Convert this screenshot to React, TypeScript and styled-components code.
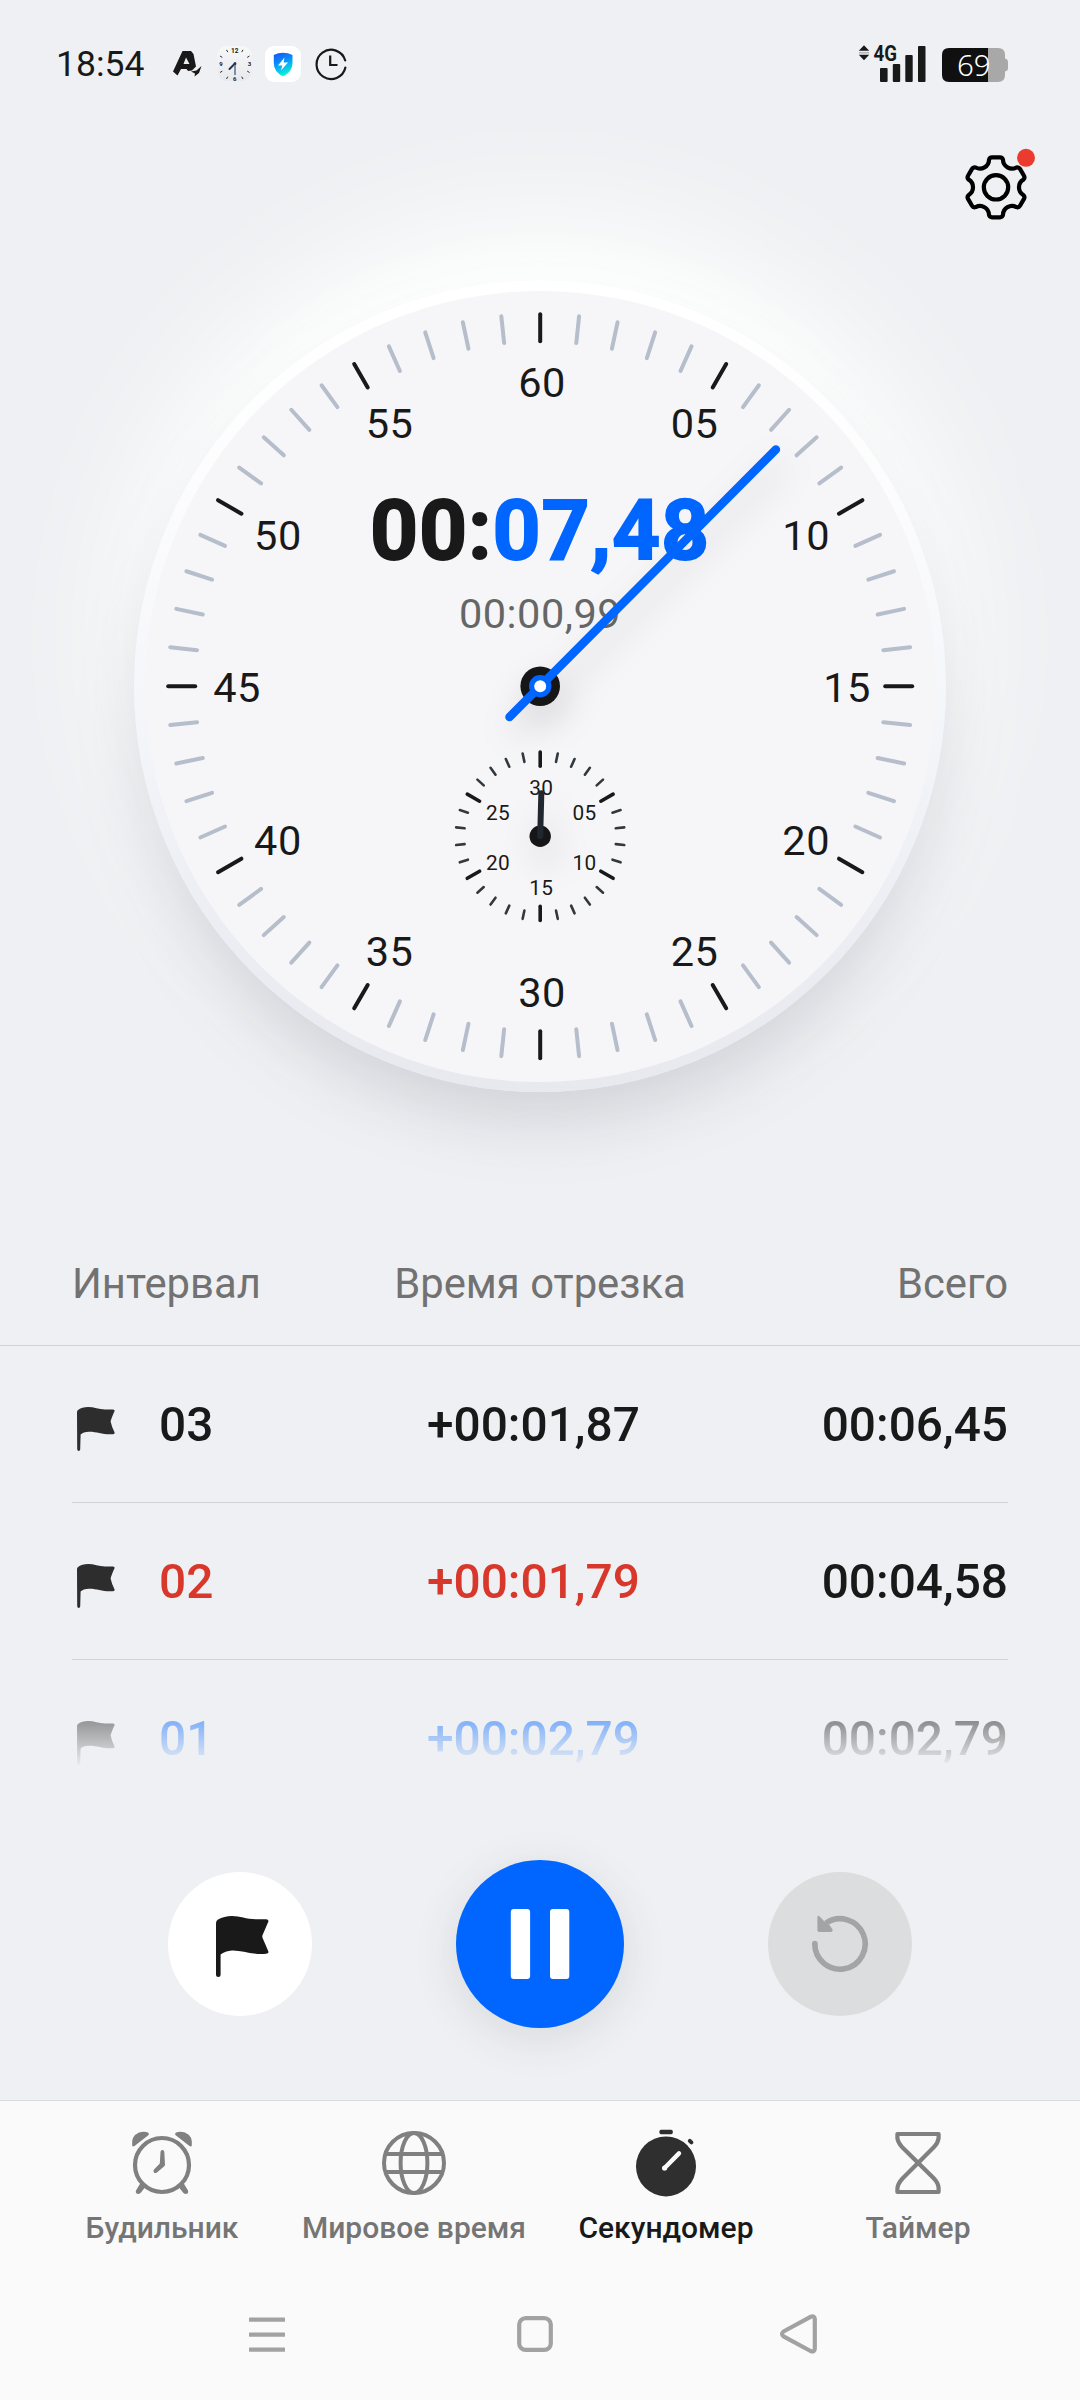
import React from "react";
import styled, { createGlobalStyle } from "styled-components";

const GlobalStyle = createGlobalStyle`
  body { margin: 0; background: #eff0f3; }
  *, *::before, *::after { box-sizing: border-box; }
`;

const ink = "#191919";
const blue = "#0066ff";

const Screen = styled.div`
  width: 1080px;
  height: 2400px;
  display: flex;
  flex-direction: column;
  overflow: hidden;
  background: #eff0f3;
  color: ${ink};
  font-family: Roboto, "Noto Sans", sans-serif;
`;

const StatusBar = styled.header`
  height: 126px;
  flex: none;
  display: flex;
  justify-content: space-between;
  align-items: center;
  padding: 2px 71px 0 56px;

  svg {
    overflow: visible;
  }
`;

const StatusGroup = styled.div`
  display: flex;
  align-items: center;
`;

const StatusTime = styled.span`
  width: 114px;
  font-size: 35.5px;
  line-height: 40px;
`;

const Toolbar = styled.div`
  height: 122px;
  flex: none;
  display: flex;
  justify-content: flex-end;
  padding: 20px 38px 0 0;
`;

const SettingsButton = styled.button`
  border: 0;
  padding: 0;
  width: 80px;
  height: 80px;
  background: none;
`;

const DialArea = styled.section`
  height: 988px;
  flex: none;
  display: flex;
  justify-content: center;
  align-items: flex-start;
  padding-top: 32px;
`;

const Dial = styled.div`
  display: grid;
  width: 812px;
  height: 812px;
  padding: 10.5px;
  border-radius: 50%;
  background: linear-gradient(#ffffff 5%, #fdfdfe 22%, #f5f6fa 52%, #eceef3 78%, #e8e9ef 100%);
  box-shadow:
    0 36px 62px -8px rgba(120, 122, 136, 0.27),
    0 -30px 60px -14px rgba(255, 255, 255, 0.8),
    0 -48px 130px 10px #fefffe;
`;

const Face = styled.div`
  display: grid;
  border-radius: 50%;
  background: #f6f6f9;

  & > * {
    grid-area: 1 / 1;
  }
`;

const Drawing = styled.svg`
  display: block;
  width: 791px;
  height: 791px;
  overflow: visible;
`;

const Readout = styled.div`
  display: flex;
  flex-direction: column;
  align-items: center;
  padding-top: 190px;
`;

const MainTime = styled.div`
  font-size: 84px;
  line-height: 100px;
  font-weight: 700;
  letter-spacing: 0.8px;
  -webkit-text-stroke: 1.8px currentColor;
`;

const Accent = styled.span`
  color: ${blue};
`;

const LapTime = styled.div`
  margin-top: 8px;
  font-size: 41.5px;
  line-height: 50px;
  letter-spacing: 0.5px;
  color: #666666;
`;

const LapTable = styled.section`
  height: 538px;
  flex: none;
  display: flex;
  flex-direction: column;
`;

const LapHeader = styled.div`
  height: 110px;
  flex: none;
  display: grid;
  grid-template-columns: 1fr 1fr 1fr;
  padding: 23px 72px 0;
  border-bottom: 1px solid #d2d3d5;
  font-size: 41.8px;
  line-height: 50px;
  color: #727272;
`;

const Cell = styled.span<{ $align?: string }>`
  text-align: ${(p) => p.$align ?? "left"};
  white-space: nowrap;
`;

const LapList = styled.div`
  height: 424px;
  overflow: hidden;
  padding: 0 72px;
  mask-image: linear-gradient(#000 320px, transparent 422px);
`;

const LapRow = styled.div<{ $tone: string }>`
  height: 157px;
  display: grid;
  grid-template-columns: 340px 1fr 240px;
  align-items: center;
  padding-top: 2px;
  border-bottom: 1px solid #d2d3d5;
  font-size: 47.8px;
  font-weight: 500;
  color: ${(p) => p.$tone};
`;

const LapIndex = styled.div`
  display: flex;
  align-items: center;
  gap: 44px;
  padding-left: 5px;

  svg {
    margin-top: 8px;
  }
`;

const LapSplit = styled(Cell)`
  padding-left: 15px;
`;

const LapTotal = styled(Cell)`
  color: ${ink};
  text-align: right;
`;

const Controls = styled.div`
  height: 326px;
  flex: none;
  display: flex;
  justify-content: space-between;
  align-items: center;
  padding: 14px 168px 0;
`;

const RoundButton = styled.button<{ $size: number; $fill: string; $raised?: boolean }>`
  display: flex;
  align-items: center;
  justify-content: center;
  width: ${(p) => p.$size}px;
  height: ${(p) => p.$size}px;
  padding: 0;
  border: 0;
  border-radius: 50%;
  background: ${(p) => p.$fill};
  box-shadow: ${(p) => (p.$raised ? "0 10px 46px rgba(60, 60, 60, 0.12)" : "none")};
`;

const MarkerFlag = styled.svg`
  margin: 5px 0 0 4px;
`;

const TabBar = styled.nav`
  height: 170px;
  flex: none;
  display: grid;
  grid-template-columns: repeat(4, 252px);
  justify-content: center;
  border-top: 1px solid #d9dadd;
  background: #fafafa;
`;

const Tab = styled.a<{ $active?: boolean }>`
  display: flex;
  flex-direction: column;
  align-items: center;
  padding-top: 26px;
  font-size: 30px;
  line-height: 36px;
  font-weight: 500;
  white-space: nowrap;
  color: ${(p) => (p.$active ? ink : "#757575")};

  svg {
    margin-bottom: 11px;
  }
`;

const SystemBar = styled.footer`
  flex: 1;
  display: flex;
  align-items: center;
  padding: 0 260px 0 247px;
  justify-content: space-between;
  background: #fafafa;
`;

const HomeIcon = styled.svg`
  margin-left: 5px;
`;

const FLAG =
  "M0 7 Q0 5 2 3.6 Q8 0 16 0 C24 0 30 3.2 40 3.2 L50 3.2 Q53 3.4 52.4 5.6 L46.6 19 Q46 20.5 46.6 22 L52.4 35.6 Q53 37.6 50 37.8 C36 39 26 34 16 34.4 Q9 35 4.6 38.4 L4.6 59 Q4.6 61 2.3 61 Q0 61 0 59Z";

const LapFlag = () => (
  <svg width="38" height="44" viewBox="0 0 38 44">
    <path
      d="M0 5 Q0 3.8 1.4 2.8 Q5 0 11 0 C17 0 22 2.4 28 2.4 L36 2.4 Q38 2.4 37.6 4 Q34.4 11 33.6 14.6 Q35 21 37.6 25.4 Q38 27 36 27.2 C26 28 20 24.6 12 24.8 Q6 25 3.6 27.6 L3.2 42.4 Q2.6 44 1.6 44 Q0.4 44 0.2 42Z"
      fill="#2d2d2d"
    />
  </svg>
);

const polar = (cx: number, cy: number, r: number, deg: number) => {
  const a = (deg * Math.PI) / 180;
  return { x: cx + r * Math.sin(a), y: cy - r * Math.cos(a) };
};

const gearPath = Array.from({ length: 6 }, (_, i) => {
  const at = (x: number, y: number) => {
    const a = (i * 60 * Math.PI) / 180;
    const px = x * Math.cos(a) - y * Math.sin(a);
    const py = x * Math.sin(a) + y * Math.cos(a);
    return `${px.toFixed(2)} ${py.toFixed(2)}`;
  };
  const end = polar(0, 0, 28.3, 45.7);
  return `${i ? "L" : "M"}${at(-7, -27.5)} Q${at(-6.4, -30)} ${at(-4, -30)} L${at(4, -30)} Q${at(6.4, -30)} ${at(7, -27.5)} A9 9 0 0 0 ${at(end.x, end.y)}`;
}).join(" ");

const Gear = () => (
  <svg width="80" height="80" viewBox="-34 -41.3 80 80">
    <path d={`${gearPath}Z`} fill="none" stroke="#000" strokeWidth="4.2" strokeLinejoin="round" />
    <circle r="12.2" fill="none" stroke="#000" strokeWidth="4.2" />
    <circle cx="30" cy="-29.5" r="9" fill="#ea3b2e" />
  </svg>
);

const ClockDrawing = () => (
  <Drawing viewBox="144.5 290.5 791 791">
    {Array.from({ length: 60 }, (_, i) => {
      const a = polar(539.7, 685.7, 345, i * 6);
      const b = polar(539.7, 685.7, 372, i * 6);
      return (
        <line
          key={i}
          x1={a.x}
          y1={a.y}
          x2={b.x}
          y2={b.y}
          stroke={i % 5 ? "#b6bdcb" : ink}
          strokeWidth="4"
          strokeLinecap="round"
        />
      );
    })}
    {Array.from({ length: 12 }, (_, i) => {
      const p = polar(541.6, 686.9, 305, (i + 1) * 30);
      return (
        <text key={i} x={p.x} y={p.y + 14.7} fontSize="41.5" letterSpacing="0.6" textAnchor="middle" fill={ink}>
          {String((i + 1) * 5).padStart(2, "0")}
        </text>
      );
    })}
    {Array.from({ length: 30 }, (_, i) => {
      const major = i % 5 === 0;
      const a = polar(539.7, 835.7, major ? 70 : 76, i * 12);
      const b = polar(539.7, 835.7, major ? 84.2 : 84.5, i * 12);
      return (
        <line
          key={i}
          x1={a.x}
          y1={a.y}
          x2={b.x}
          y2={b.y}
          stroke={major ? ink : "#33383e"}
          strokeWidth={major ? 3.6 : 2.6}
          strokeLinecap="round"
        />
      );
    })}
    {Array.from({ length: 6 }, (_, i) => {
      const p = polar(540.8, 837.2, 50, (i + 1) * 60);
      return (
        <text key={i} x={p.x} y={p.y + 7.4} fontSize="20.8" letterSpacing="0.3" textAnchor="middle" fill={ink}>
          {String((i + 1) * 5).padStart(2, "0")}
        </text>
      );
    })}
  </Drawing>
);

const HandsDrawing = () => {
  const tip = polar(539.7, 685.7, 334, 44.88);
  const tail = polar(539.7, 685.7, -43.5, 44.88);
  const small = polar(539.7, 835.7, 43, 1.5);
  return (
    <Drawing viewBox="144.5 290.5 791 791">
      <defs>
        <filter id="handShadow" filterUnits="userSpaceOnUse" x="400" y="350" width="500" height="600">
          <feDropShadow dx="5" dy="16" stdDeviation="17" floodColor="#000" floodOpacity="0.14" />
        </filter>
      </defs>
      <g filter="url(#handShadow)">
        <circle cx="539.7" cy="835.7" r="10.7" fill="#191919" />
        <line x1="539.7" y1="835.5" x2={small.x} y2={small.y} stroke="#24282d" strokeWidth="6" strokeLinecap="round" />
      </g>
      <g filter="url(#handShadow)">
        <circle cx="539.7" cy="685.7" r="19.8" fill="#191919" />
        <line x1={tail.x} y1={tail.y} x2={tip.x} y2={tip.y} stroke={blue} strokeWidth="8.6" strokeLinecap="round" />
        <circle cx="539.7" cy="685.7" r="8.6" fill="#fff" stroke={blue} strokeWidth="5.2" />
      </g>
    </Drawing>
  );
};

const NotificationIcons = () => (
  <svg width="180" height="40" viewBox="170 43 180 40">
    <path
      d="M182.5 50 H191 L193.5 53 L196 65.5 L192 69.5 L188 70 L186.5 68 H181 L177.5 74.5 L173 70.5Z M186 56.5 L183.5 63 H189.5Z"
      fill={ink}
      fillRule="evenodd"
    />
    <path d="M191 70.5 L196.5 69.5 L201.5 65 L199 72 L194.5 75.5 L195 72.5Z" fill={ink} />
    <defs>
      <linearGradient id="clockTile" x1="0" y1="0" x2="0" y2="1">
        <stop offset="0" stopColor="#f8f8f8" />
        <stop offset="1" stopColor="#e6e9ed" />
      </linearGradient>
      <linearGradient id="shieldFill" x1="0" y1="0" x2="0.35" y2="1">
        <stop offset="0" stopColor="#1450f5" />
        <stop offset="0.45" stopColor="#0a8cfa" />
        <stop offset="1" stopColor="#08f0d8" />
      </linearGradient>
    </defs>
    <rect x="217" y="45" width="35" height="35" rx="10" fill="url(#clockTile)" />
    <text x="234.8" y="51.5" fontSize="6.5" fontWeight="700" textAnchor="middle" fill={ink}>12</text>
    <text x="221" y="65" fontSize="6" fontWeight="700" textAnchor="middle" fill={ink}>9</text>
    <text x="249.5" y="65" fontSize="6" fontWeight="700" textAnchor="middle" fill={ink}>3</text>
    <text x="234.8" y="79.5" fontSize="6" fontWeight="700" textAnchor="middle" fill={ink}>6</text>
    <path
      d="M226.5 48.8 l1.3 2.3 M243 48.8 l-1.3 2.3 M220 55 l2.3 1.4 M249.5 55 l-2.3 1.4 M220 71.5 l2.3 -1.4 M249.5 71.5 l-2.3 -1.4 M226.5 78 l1.3 -2.3 M243 78 l-1.3 -2.3"
      stroke={ink}
      strokeWidth="0.9"
    />
    <path d="M235 62.5 L229.5 68" stroke="#26334f" strokeWidth="2" strokeLinecap="round" />
    <path d="M235 63 V74" stroke="#7683a0" strokeWidth="1.8" />
    <circle cx="235" cy="62.7" r="1.4" fill="#26334f" />
    <rect x="265" y="45" width="36" height="36" rx="9" fill="#fff" />
    <path d="M283 51.8 Q288 51.8 292.5 54 V62 Q292.5 71 283 75.3 Q273.8 71 273.8 62 V54 Q278 51.8 283 51.8Z" fill="url(#shieldFill)" />
    <path d="M284.5 56.5 L278 64.5 H282.3 L281 69.5 L288 61.5 H283.6Z" fill="#fff" />
    <path d="M345.2 59.5 A14.6 14.6 0 1 0 345.4 66.5" fill="none" stroke={ink} strokeWidth="2.2" strokeLinecap="round" />
    <path d="M330.2 54.5 V64 H337.5" fill="none" stroke={ink} strokeWidth="2.2" />
  </svg>
);

const SignalIcons = () => (
  <svg width="152" height="46" viewBox="857 40 152 46">
    <path d="M864 44.3 L869.2 49.8 H858.8Z M864 59.3 L858.8 53.8 H869.2Z" fill={ink} />
    <path d="M859 51.8 H869" stroke="#a5a6a8" strokeWidth="1.2" />
    <text x="873.6" y="60" fontSize="22" fontWeight="700" textLength="23.5" lengthAdjust="spacingAndGlyphs" fill={ink}>
      4G
    </text>
    <rect x="880" y="67" width="7.6" height="14" rx="1" fill={ink} />
    <rect x="892.8" y="63" width="7.4" height="18" rx="1" fill={ink} />
    <rect x="905.3" y="54" width="7.4" height="27" rx="1" fill={ink} />
    <rect x="918" y="45" width="7.5" height="36" rx="1" fill={ink} />
    <path d="M988 47 H998 Q1005 47 1005 54 V57.5 Q1008 58 1008 61 V67 Q1008 70 1005 70.5 V74 Q1005 81 998 81 H988Z" fill="#a8a8a8" />
    <path d="M988 47 H949 Q942 47 942 54 V74 Q942 81 949 81 H988Z" fill="#101010" />
    <text x="957" y="74.6" fontSize="29.5" fontFamily="'Noto Sans', sans-serif" fontWeight="300" fill="#fff">69</text>
  </svg>
);

const AlarmIcon = () => (
  <svg width="72" height="72" viewBox="126 2127 72 72" fill="#808080">
    <circle cx="162" cy="2165" r="27" fill="none" stroke="#808080" strokeWidth="4.2" />
    <path d="M132.2 2145.5 Q131 2136 139 2132.5 Q145 2130.8 148.6 2133 Q149.5 2134.5 148 2135.6 L134.5 2146 Q132.6 2147 132.2 2145.5Z" />
    <path d="M191.8 2145.5 Q193 2136 185 2132.5 Q179 2130.8 175.4 2133 Q174.5 2134.5 176 2135.6 L189.5 2146 Q191.4 2147 191.8 2145.5Z" />
    <path d="M140.5 2183 L145 2187.5 L140.5 2193 Q138.5 2194.8 136.5 2193.6 Q135.2 2192 136 2190.5Z M183.5 2183 L179 2187.5 L183.5 2193 Q185.5 2194.8 187.5 2193.6 Q188.8 2192 188 2190.5Z" />
    <path d="M160.5 2152 Q160.6 2150 162.4 2150 Q164.2 2150 164.3 2152 L165 2164.5 Q165 2165.8 164 2166.6 L156.6 2172.8 Q155 2173.6 153.9 2172.4 Q152.9 2171 154 2169.6 L159.8 2163.6Z" />
  </svg>
);

const GlobeIcon = () => (
  <svg width="72" height="72" viewBox="-36 -36 72 72" fill="none" stroke="#808080" strokeWidth="4">
    <circle r="30" />
    <ellipse rx="13.4" ry="30" />
    <path d="M-28.5 -9 H28.5 M-28.5 9 H28.5" />
  </svg>
);

const StopwatchIcon = () => (
  <svg width="72" height="72" viewBox="630 2127 72 72">
    <circle cx="666" cy="2166.4" r="30" fill="#2f2f2f" />
    <rect x="659.4" y="2129.8" width="13.4" height="4.4" rx="1.6" fill="#2f2f2f" />
    <path d="M689.8 2140.8 L691.4 2142.4" stroke="#2f2f2f" strokeWidth="4" strokeLinecap="round" />
    <path d="M679 2153.4 L664.6 2168" stroke="#fafafa" strokeWidth="4.4" strokeLinecap="round" />
    <circle cx="664.6" cy="2168" r="2.6" fill="#fafafa" />
  </svg>
);

const TimerIcon = () => (
  <svg width="72" height="72" viewBox="882 2127 72 72" fill="none" stroke="#808080" strokeWidth="4.2" strokeLinejoin="round">
    <path d="M897.4 2134 H938.6 V2138 Q938 2143 934 2147 L902.5 2178.5 Q897.4 2184 897.4 2189 V2192 H938.6 V2188 Q938.4 2183 933.5 2178 L902 2147 Q897.8 2142 897.4 2138Z" />
  </svg>
);

const laps = [
  { index: "03", split: "+00:01,87", total: "00:06,45", tone: ink },
  { index: "02", split: "+00:01,79", total: "00:04,58", tone: "#d8382b" },
  { index: "01", split: "+00:02,79", total: "00:02,79", tone: blue },
];

const tabs = [
  { label: "Будильник", icon: <AlarmIcon /> },
  { label: "Мировое время", icon: <GlobeIcon /> },
  { label: "Секундомер", icon: <StopwatchIcon />, active: true },
  { label: "Таймер", icon: <TimerIcon /> },
];

export default function App() {
  return (
    <Screen>
      <GlobalStyle />
      <StatusBar>
        <StatusGroup>
          <StatusTime>18:54</StatusTime>
          <NotificationIcons />
        </StatusGroup>
        <SignalIcons />
      </StatusBar>

      <Toolbar>
        <SettingsButton aria-label="Настройки">
          <Gear />
        </SettingsButton>
      </Toolbar>

      <DialArea>
        <Dial>
          <Face>
            <ClockDrawing />
            <Readout>
              <MainTime>
                00:<Accent>07,48</Accent>
              </MainTime>
              <LapTime>00:00,99</LapTime>
            </Readout>
            <HandsDrawing />
          </Face>
        </Dial>
      </DialArea>

      <LapTable>
        <LapHeader>
          <Cell>Интервал</Cell>
          <Cell $align="center">Время отрезка</Cell>
          <Cell $align="right">Всего</Cell>
        </LapHeader>
        <LapList>
          {laps.map((lap) => (
            <LapRow key={lap.index} $tone={lap.tone}>
              <LapIndex>
                <LapFlag />
                <Cell>{lap.index}</Cell>
              </LapIndex>
              <LapSplit>{lap.split}</LapSplit>
              <LapTotal>{lap.total}</LapTotal>
            </LapRow>
          ))}
        </LapList>
      </LapTable>

      <Controls>
        <RoundButton $size={144} $fill="#ffffff" aria-label="Интервал">
          <MarkerFlag width="53" height="61" viewBox="0 0 53 61">
            <path d={FLAG} fill={ink} />
          </MarkerFlag>
        </RoundButton>
        <RoundButton $size={168} $fill={blue} $raised aria-label="Пауза">
          <svg width="60" height="70" viewBox="0 0 60 70" fill="#fff">
            <rect x="0.8" width="19.3" height="70" rx="3" />
            <rect x="40" width="19.3" height="70" rx="3" />
          </svg>
        </RoundButton>
        <RoundButton $size={144} $fill="#dcdddf" aria-label="Сброс">
          <svg width="60" height="60" viewBox="-30 -30 60 60">
            <path d="M-25.2 -0.6 A25.2 25.2 0 1 0 -14 -21" fill="none" stroke="#a4a4a4" strokeWidth="5.6" />
            <circle cx="-25.2" cy="-0.4" r="2.8" fill="#a4a4a4" />
            <path d="M-22.6 -27 Q-22 -29 -20.4 -27.6 L-16 -23 L-10.5 -19 L-7.4 -14.6 Q-7 -12.2 -9 -12 L-21 -12 Q-22.6 -12.2 -22.6 -14Z" fill="#a4a4a4" />
          </svg>
        </RoundButton>
      </Controls>

      <TabBar>
        {tabs.map((tab) => (
          <Tab key={tab.label} $active={tab.active}>
            {tab.icon}
            {tab.label}
          </Tab>
        ))}
      </TabBar>

      <SystemBar>
        <svg width="40" height="44" viewBox="247 2313 40 44" fill="#a2a2a2">
          <rect x="249" y="2317.4" width="36" height="4.4" rx="0.5" />
          <rect x="249" y="2332.4" width="36" height="4.4" rx="0.5" />
          <rect x="249" y="2347.4" width="36" height="4.4" rx="0.5" />
        </svg>
        <HomeIcon width="40" height="44" viewBox="515 2313 40 44">
          <rect x="519.2" y="2318.1" width="31.6" height="31.8" rx="6.5" fill="none" stroke="#a2a2a2" strokeWidth="4.2" />
        </HomeIcon>
        <svg width="42" height="44" viewBox="778 2313 42 44">
          <path
            d="M783.5 2331.5 L810.5 2316.8 Q814.8 2315.2 814.8 2319 V2348.6 Q814.8 2352.6 810.5 2351 L783.5 2336.3 Q780.6 2334 783.5 2331.5Z"
            fill="none"
            stroke="#a2a2a2"
            strokeWidth="4.2"
            strokeLinejoin="round"
          />
        </svg>
      </SystemBar>
    </Screen>
  );
}
